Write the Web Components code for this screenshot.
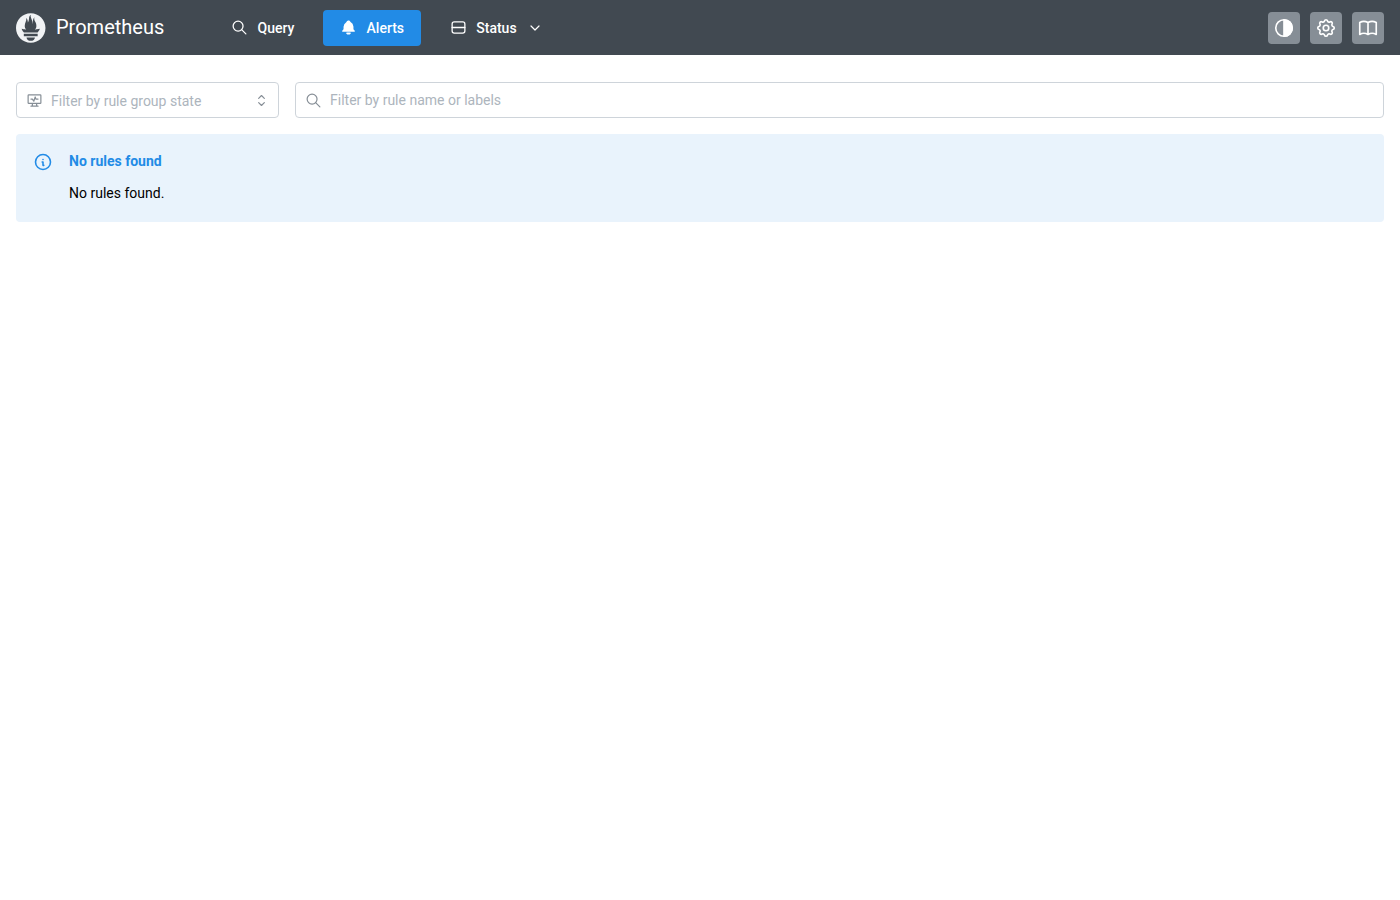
<!doctype html>
<html><head><meta charset="utf-8">
<style>html,body{margin:0;background:#fff;font-family:Roboto,sans-serif}</style></head>
<body>
<prom-app></prom-app>
<script>
const I={
search:'<circle cx="10" cy="10" r="7"/><path d="M21 21l-6-6"/>',
server:'<rect x="3" y="4" width="18" height="16" rx="3"/><path d="M3 12h18"/>',
chevron:'<path d="M6 9l6 6l6-6"/>',
selector:'<path d="M8 9l4-4l4 4M16 15l-4 4l-4-4"/>',
monitor:'<path d="M3 5a1 1 0 0 1 1-1h16a1 1 0 0 1 1 1v10a1 1 0 0 1-1 1H4a1 1 0 0 1-1-1zM7 20h10M9 16v4M15 16v4M7 10h2l2 3l2-6l1 3h3"/>',
info:'<path d="M3 12a9 9 0 1 0 18 0a9 9 0 0 0-18 0M12 9h.01M11 12h1v4h1"/>',
book:'<path d="M3 19a9 9 0 0 1 9 0a9 9 0 0 1 9 0M3 6a9 9 0 0 1 9 0a9 9 0 0 1 9 0M3 6v13M12 6v13M21 6v13"/>',
gear:'<path d="M10.325 4.317c.426-1.756 2.924-1.756 3.35 0a1.724 1.724 0 0 0 2.573 1.066c1.543-.94 3.31.826 2.37 2.37a1.724 1.724 0 0 0 1.065 2.572c1.756.426 1.756 2.924 0 3.35a1.724 1.724 0 0 0-1.066 2.573c.94 1.543-.826 3.31-2.37 2.37a1.724 1.724 0 0 0-2.572 1.065c-.426 1.756-2.924 1.756-3.35 0a1.724 1.724 0 0 0-2.573-1.066c-1.543.94-3.31-.826-2.37-2.37a1.724 1.724 0 0 0-1.065-2.572c-1.756-.426-1.756-2.924 0-3.35a1.724 1.724 0 0 0 1.066-2.573c-.94-1.543.826-3.31 2.37-2.37c1 .608 2.296.07 2.572-1.065z"/><path d="M9 12a3 3 0 1 0 6 0a3 3 0 0 0-6 0"/>',
contrast:'<circle cx="12" cy="12" r="9"/><path d="M12 3a9 9 0 0 1 0 18z" fill="currentColor"/>',
bell:'<path fill="currentColor" stroke="none" d="M14.235 19c.865 0 1.322 1.024.745 1.668A3.992 3.992 0 0 1 12 22a3.992 3.992 0 0 1-2.98-1.332c-.552-.616-.158-1.579.634-1.661l.11-.006h4.471zM12 2c1.358 0 2.506.903 2.875 2.141l.046.171l.008.043a8.013 8.013 0 0 1 4.024 6.069l.028.287l.019.289v2.931l.021.136a3 3 0 0 0 1.143 1.847l.167.117l.162.099c.86.487.56 1.766-.377 1.864L20 18H4c-1.028 0-1.387-1.364-.493-1.87a3 3 0 0 0 1.472-2.063L5 13.924l.001-2.97A8 8 0 0 1 8.822 4.5l.248-.146l.01-.043a3.003 3.003 0 0 1 2.562-2.29l.182-.017L12 2z"/>'
};
function icon(n,s,w=2,c='currentColor'){return `<svg xmlns="http://www.w3.org/2000/svg" width="${s}" height="${s}" viewBox="0 0 24 24" fill="none" stroke="${c}" stroke-width="${w}" stroke-linecap="round" stroke-linejoin="round" style="display:block;flex:none">${I[n]}</svg>`}
const def=(n,css,html)=>customElements.define(n,class extends HTMLElement{connectedCallback(){if(this.shadowRoot)return;this.attachShadow({mode:'open'}).innerHTML=`<style>${css}</style>`+(typeof html==='function'?html(this):html)}});

def('prom-logo',`:host{display:flex;align-items:center;gap:10px;color:#fff;font-size:20px;line-height:1;width:198px}
span{padding-bottom:2px}`,
`<svg width="30" height="30" viewBox="0 0 115.333 114.667" style="display:block;flex:none"><path fill="#f1f3f5" d="M56.667.667C25.372.667 0 26.036 0 57.332c0 31.295 25.372 56.666 56.667 56.666s56.666-25.371 56.666-56.666C113.333 26.036 87.961.667 56.667.667zm0 106.055c-8.904 0-16.123-5.948-16.123-13.283H72.79c0 7.334-7.219 13.283-16.123 13.283zM83.297 89.04H30.034v-9.658h53.264v9.658zm-.191-14.629H30.186c-.176-.203-.356-.403-.526-.609-5.452-6.62-6.736-10.076-7.983-13.598-.021-.116 6.611 1.355 11.314 2.413 0 0 2.42.56 5.958 1.205-3.397-3.982-5.414-9.044-5.414-14.218 0-11.359 8.712-21.285 5.569-29.308 3.059.249 6.331 6.456 6.552 16.161 3.252-4.494 4.613-12.701 4.613-17.733 0-5.21 3.433-11.262 6.867-11.469-3.061 5.045.793 9.37 4.219 20.099 1.285 4.03 1.121 10.812 2.113 15.113.329-8.933 1.865-21.967 7.532-26.467-2.5 5.667.37 12.758 2.333 16.167 3.167 5.5 5.087 9.667 5.087 17.548 0 5.284-1.951 10.259-5.242 14.148 3.742-.702 6.326-1.335 6.326-1.335l12.152-2.371c.001-.001-1.765 7.261-8.55 14.254z"/></svg><span>Prometheus</span>`);

def('nav-link',`:host{display:flex;align-items:center;height:36px;padding:0 17px;gap:9.5px;border-radius:4px;color:#fff;font-size:14px;font-weight:500;line-height:1}
:host([active]){background:#228be6}`,
h=>`${icon(h.getAttribute('icon'),17,1.8)}<slot></slot>${h.hasAttribute('menu')?'<span style="margin-left:.5px">'+icon('chevron',16,1.8)+'</span>':''}`);

def('icon-btn',`:host{display:flex;align-items:center;justify-content:center;width:32px;height:32px;border-radius:4px;background:#868e96;color:#fff}`,
h=>icon(h.getAttribute('icon'),22,1.8));

def('app-header',`:host{display:flex;align-items:center;height:55px;padding:0 16px;background:rgb(65,73,81);box-sizing:border-box}
nav{display:flex;align-items:center;gap:11.7px}
.r{margin-left:auto;display:flex;gap:10px}`,
`<prom-logo></prom-logo><nav><nav-link icon="search">Query</nav-link><nav-link icon="bell" active>Alerts</nav-link><nav-link icon="server" menu>Status</nav-link></nav>
<div class="r"><icon-btn icon="contrast"></icon-btn><icon-btn icon="gear"></icon-btn><icon-btn icon="book"></icon-btn></div>`);

def('filter-input',`:host{display:flex;align-items:center;box-sizing:border-box;height:36px;border:1px solid #ced4da;border-radius:4px;background:#fff;color:#adb5bd;font-size:14px;line-height:1;padding:0 8.5px 0 9px;gap:8px;min-width:0}
.i{color:#868e96;display:block}.t{flex:1}
:host([selector]) .t{padding-top:2px}`,
h=>`<span class="i">${icon(h.getAttribute('icon'),17,1.7)}</span><span class="t"><slot></slot></span>${h.hasAttribute('selector')?'<span class="i">'+icon('selector',17,1.7)+'</span>':''}`);

def('info-alert',`:host{display:flex;box-sizing:border-box;height:88px;padding:16px;border-radius:4px;background:#e9f3fc;gap:16px}
.ic{color:#228be6;padding-top:2px;margin-left:1px}
.title{color:#228be6;font-size:14px;font-weight:700;line-height:22px}
.body{color:#000;font-size:14px;line-height:22px;margin-top:10px}`,
`<span class="ic">${icon('info',20,1.9)}</span><div><div class="title">No rules found</div><div class="body"><slot></slot></div></div>`);

def('prom-app',`:host{display:block;font-family:Roboto,sans-serif}
main{display:flex;flex-direction:column;gap:16px;padding:27px 16px 16px}
.row{display:flex;gap:16px}
.a{width:263px;flex:none}.b{flex:1}`,
`<app-header></app-header><main><div class="row"><filter-input class="a" icon="monitor" selector>Filter by rule group state</filter-input><filter-input class="b" icon="search">Filter by rule name or labels</filter-input></div><info-alert>No rules found.</info-alert></main>`);
</script>
</body></html>
